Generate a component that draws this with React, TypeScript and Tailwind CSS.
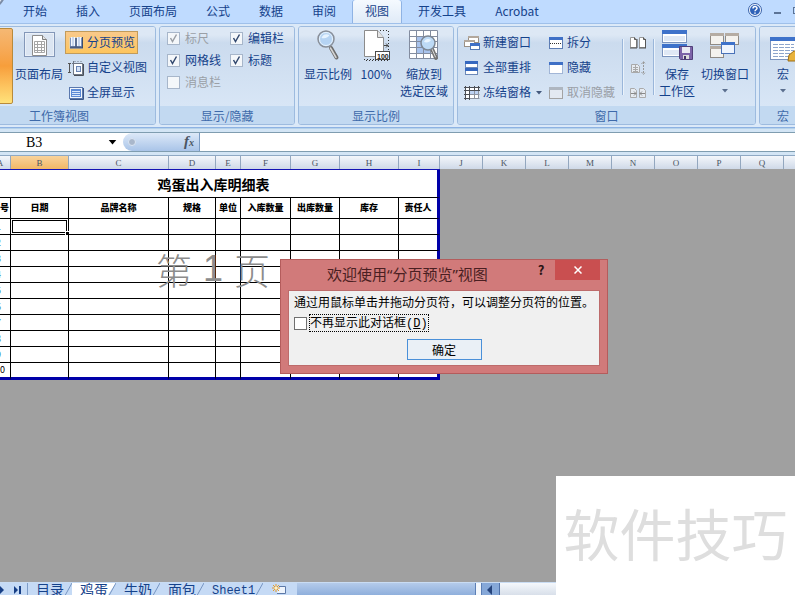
import type { ReactNode } from "react";
import clsx from "clsx";

const TABS = ["开始", "插入", "页面布局", "公式", "数据", "审阅", "视图", "开发工具", "Acrobat"];

const COLUMNS = [
  { id: "A", title: "序号", width: "w-[21px]" },
  { id: "B", title: "日期", width: "w-[58px]" },
  { id: "C", title: "品牌名称", width: "w-[100px]" },
  { id: "D", title: "规格", width: "w-[47px]" },
  { id: "E", title: "单位", width: "w-[25px]" },
  { id: "F", title: "入库数量", width: "w-[50px]" },
  { id: "G", title: "出库数量", width: "w-[49px]" },
  { id: "H", title: "库存", width: "w-[59px]" },
  { id: "I", title: "责任人", width: "w-[41px]" },
];

const EMPTY_COLUMNS = "JKLMNOPQRSTUVWXYZ".split("");
const ROWS = [1, 2, 3, 4, 5, 6, 7, 8, 9, 10];
const SHEETS = ["目录", "鸡蛋", "牛奶", "面包", "Sheet1"];

/* ---------- Icons ---------- */

function Arrow({ className }: { className?: string }) {
  return (
    <svg viewBox="0 0 6 4" className={clsx("w-[6px] h-[4px]", className)}>
      <path d="M0 0h6L3 3.5z" fill="currentColor" />
    </svg>
  );
}

function PageLayoutIcon() {
  return (
    <svg viewBox="0 0 32 32" className="w-8 h-8">
      <rect x="1.500" y="2.500" width="30" height="24" fill="#eaf0f8" stroke="#8397b8" />
      <rect x="3" y="4" width="27" height="21" fill="#dbe5f2" />
      <path d="M9.500 5.500h10l4 4v16h-14z" fill="#fff" stroke="#8d8d8d" />
      <path d="M19.500 5.500v4h4" fill="#e4e4e4" stroke="#7d7d7d" />
      <path
        d="M11.500 11.500h10v11h-10zM11.500 14.500h10M11.500 17.500h10M11.500 20.500h10M14.500 11.500v11M18.500 11.500v11"
        fill="none"
        stroke="#a5a5a5"
      />
    </svg>
  );
}

function NormalViewIcon() {
  return (
    <svg viewBox="0 0 32 32" className="w-8 h-8">
      <rect x="2.500" y="2.500" width="27" height="25" fill="#fff" stroke="#6b6b6b" />
      <path d="M2 7.500h28M2 11.500h28M2 15.500h28M2 19.500h28M2 23.500h28M9.500 3v24M16.500 3v24M23.500 3v24" stroke="#7289ad" />
    </svg>
  );
}

function PageBreakIcon() {
  return (
    <svg viewBox="0 0 16 16" className="w-4 h-4">
      <path d="M1.500 2.500h13v11h-13z" fill="#7c93bd" stroke="#e8d2a4" />
      <path d="M3 2h4v9H3zM9 2h4v9H9z" fill="#f4f8ff" />
      <path d="M5 2v9M11 2v9" stroke="#c9d7ee" strokeWidth="2" />
      <path d="M2 12.500h13" stroke="#4a5c82" strokeWidth="2" />
      <path d="M14.500 2v11M8 3v9" stroke="#3d4d6b" />
    </svg>
  );
}

function CustomViewIcon() {
  return (
    <svg viewBox="0 0 16 16" className="w-4 h-4">
      <path d="M0 3.500h3M0 12.500h3M1.500 3.500v9" stroke="#555" fill="none" />
      <rect x="5.500" y="3.500" width="9" height="11" fill="#fff" stroke="#6f7785" />
      <path d="M4 3.500h11M5.500 1v14" stroke="#6f7785" />
      <path d="M6.500 1.500h1M9.500 1.500h1M12.500 1.500h1" stroke="#6f7785" />
      <rect x="8.500" y="6.500" width="4" height="5" fill="#d5e2f5" stroke="#6a85b5" />
      <path d="M15.500 4v11.500H6" fill="none" stroke="#4a4f58" />
    </svg>
  );
}

function FullScreenIcon() {
  return (
    <svg viewBox="0 0 16 16" className="w-4 h-4">
      <rect x="1.500" y="2.500" width="13" height="11" fill="#f2f6fc" stroke="#5a78ae" />
      <rect x="3" y="4" width="10" height="8" fill="#5c8ad6" />
      <path d="M4 6.500h8M4 8.500h8M4 10.500h8" stroke="#dbe8fb" />
      <path d="M15.500 3v11.500H2" fill="none" stroke="#3b5688" />
    </svg>
  );
}

function ZoomIcon() {
  return (
    <svg viewBox="0 0 32 32" className="w-8 h-8">
      <path d="M19 18l5.500 9.500" stroke="#6d6d6d" strokeWidth="4" strokeLinecap="round" />
      <path d="M18.500 18l5.500 9.500" stroke="#d5d5d5" strokeWidth="1.500" strokeLinecap="round" />
      <circle cx="14" cy="9" r="8" fill="#b5d3f3" stroke="#8a8f98" strokeWidth="1.500" />
      <circle cx="14" cy="9" r="6.500" fill="none" stroke="#e8f3fd" />
      <path d="M9.500 8c1-3 4-5 8-3-1 2-4 4-8 3z" fill="#e6f3ff" />
    </svg>
  );
}

function HundredIcon() {
  return (
    <svg viewBox="0 0 32 32" className="w-8 h-8">
      <path d="M5 .5h23.500v30H5" fill="none" stroke="#333" strokeDasharray="1 2" />
      <path d="M4.500.5h13l6 7v19h-19z" fill="#fff" stroke="#8b8b8b" />
      <path d="M17.500.5v7h6" fill="#e5e5e5" stroke="#8b8b8b" />
      <path d="M24 15.500h4M26 13.500l2 2-2 2" fill="none" stroke="#444" />
      <path d="M4 29.500h11" stroke="#333" strokeDasharray="1 2" />
      <rect x="15.500" y="21.500" width="14" height="8" fill="#fff" stroke="#4a4a4a" />
      <text x="17" y="28.500" fontSize="7" fontWeight="bold" fontFamily="Liberation Sans" fill="#222">
        100
      </text>
    </svg>
  );
}

function ZoomSelectionIcon() {
  return (
    <svg viewBox="0 0 32 32" className="w-8 h-8">
      <rect x="1" y="0" width="29" height="29" fill="#fff" />
      <rect x="8" y="6" width="14" height="17" fill="#a9c4ee" />
      <path
        d="M1.500.5h28v28h-28zM1 6.500h29M1 11.500h29M1 17.500h29M1 23.500h29M8.500 0v29M15.500 0v29M22.500 0v29"
        fill="none"
        stroke="#838da0"
      />
      <path d="M24 19l4 9" stroke="#737373" strokeWidth="4" strokeLinecap="round" />
      <path d="M24 19l3.500 8" stroke="#ddd" strokeLinecap="round" />
      <circle cx="20" cy="13" r="7" fill="#bddaf6" stroke="#7d8794" strokeWidth="1.500" />
      <path d="M16 12c1-3 4-4 7-2-1 2-4 3-7 2z" fill="#eaf5ff" />
    </svg>
  );
}

function NewWindowIcon() {
  return (
    <svg viewBox="0 0 16 16" className="w-4 h-4">
      <rect x="4.500" y="1.500" width="10" height="6" fill="#fff" stroke="#9a8f84" />
      <path d="M4 2h11" stroke="#b3a89d" strokeWidth="2" />
      <rect x=".5" y="5.500" width="10" height="6" fill="#fff" stroke="#9a8f84" />
      <path d="M0 6h11" stroke="#b3a89d" strokeWidth="2" />
      <rect x="6.500" y="8.500" width="9" height="6" fill="#fff" stroke="#5579b5" />
      <path d="M6 8h10v3H6z" fill="#3f70c6" />
    </svg>
  );
}

function ArrangeIcon() {
  return (
    <svg viewBox="0 0 16 16" className="w-4 h-4">
      <rect x="1.500" y="1.500" width="12" height="6" fill="#fff" stroke="#6b88b8" />
      <rect x="1.500" y="8.500" width="12" height="6" fill="#fff" stroke="#6b88b8" />
      <path d="M1 1h13v3H1zM1 8h13v3H1z" fill="#3668bf" />
    </svg>
  );
}

function FreezeIcon() {
  return (
    <svg viewBox="0 0 16 16" className="w-4 h-4">
      <rect x="1" y="2" width="14" height="12" fill="#fff" />
      <path d="M5 5h10v4H5z" fill="#bdd2f2" />
      <path d="M5.500 9.500h10M5.500 13.500h10M10.500 5v9M14.500 5v9" stroke="#8c93a0" />
      <path d="M0 2.500h16M0 5.500h16M0 9.500h5M0 13.500h5M1.500 1v14M5.500 1v14M10.500 1v4M14.500 1v4" stroke="#4c4f55" />
    </svg>
  );
}

function PaneIcon({ kind }: { kind: "split" | "hide" | "unhide" }) {
  const off = kind === "unhide";
  return (
    <svg viewBox="0 0 16 16" className="w-4 h-4">
      <rect
        x="1.500"
        y="2.500"
        width="13"
        height="11"
        fill={off ? "#e3e9f1" : "#fff"}
        stroke={off ? "#a3a3a3" : "#5d7db4"}
        strokeDasharray={kind === "hide" ? "1 1" : undefined}
      />
      <path d="M1 2h14v3H1z" fill={off ? "#aeb6c0" : "#3f70c6"} />
      {kind === "split" && <path d="M2 8.500h12" stroke="#333" strokeDasharray="1 1" />}
    </svg>
  );
}

function SideBySideIcon() {
  return (
    <svg viewBox="0 0 16 16" className="w-4 h-4">
      <path d="M.5 2.500h4l2 2v8h-6zM9.500 2.500h4l2 2v8h-6z" fill="#fff" stroke="#9a9a9a" />
      <path d="M0 13h7M9 13h7M7 4v9M15.500 4v9" stroke="#555" />
      <path d="M4.500 2.500v2h2M13.500 2.500v2h2" fill="none" stroke="#555" />
    </svg>
  );
}

function SyncScrollIcon() {
  return (
    <svg viewBox="0 0 16 16" className="w-4 h-4">
      <path d="M1.500 4.500h6l2 2v6h-8z" fill="#e6ebf1" stroke="#a9a9a9" />
      <path d="M3 7.500h5M3 9.500h5M3 11.500h5M5.500 5v8" stroke="#a9a9a9" />
      <path d="M13.500 2v12M11.500 4l2-2.500 2 2.500M11.500 12l2 2.500 2-2.500" fill="none" stroke="#999" strokeDasharray="2 1" />
    </svg>
  );
}

function ResetPositionIcon() {
  return (
    <svg viewBox="0 0 16 16" className="w-4 h-4">
      <path d="M.5 3.500h4l2 2v7h-6zM9.500 3.500h4l2 2v7h-6z" fill="#e6ebf1" stroke="#aaa" />
      <path d="M1 8.500h5M4 6.500l2 2-2 2M15 8.500h-5M12 6.500l-2 2 2 2" fill="none" stroke="#888" />
    </svg>
  );
}

function SaveWorkspaceIcon() {
  return (
    <svg viewBox="0 0 32 32" className="w-8 h-8">
      <rect x="1.500" y=".5" width="24" height="12" fill="#fff" stroke="#7a93bd" />
      <rect x="1.500" y="14.500" width="24" height="12" fill="#fff" stroke="#7a93bd" />
      <path d="M1 0h25v4H1zM1 14h25v4H1z" fill="#3e72ca" />
      <path d="M3 6h21v5H3zM3 20h16v5H3z" fill="#dfe8f5" />
      <path d="M18.500 16.500h13v13h-12l-1-1z" fill="#7d64a8" stroke="#51407a" />
      <path d="M21 17h8v6h-8z" fill="#e9e9f3" />
      <path d="M22 25h6v4h-6z" fill="#ddd" />
      <path d="M23 26h2v3h-2z" fill="#433566" />
    </svg>
  );
}

function SwitchWindowIcon() {
  return (
    <svg viewBox="0 0 32 32" className="w-8 h-8">
      <g fill="#f4f2ee" stroke="#8f8a84">
        <rect x="1.500" y="3.500" width="13" height="11" />
        <rect x="16.500" y="3.500" width="13" height="11" />
        <rect x="1.500" y="16.500" width="13" height="11" />
      </g>
      <path d="M1 3h14v3H1zM16 3h14v3H16zM1 16h14v3H1z" fill="#b5aca3" />
      <rect x="12.500" y="12.500" width="13" height="11" fill="#eef4fd" stroke="#4a72b8" />
      <path d="M12 12h14v3H12z" fill="#3e72ca" />
    </svg>
  );
}

function MacroIcon() {
  return (
    <svg viewBox="0 0 32 32" className="w-8 h-8">
      <rect x="3.500" y="7.500" width="26" height="22" fill="#fff" stroke="#7a93bd" />
      <path d="M3 7h27v4H3z" fill="#3e72ca" />
      <path d="M6 14.500h21M6 17.500h21M6 20.500h21M6 23.500h21M6 26.500h21" stroke="#8da5cc" strokeDasharray="5 1" />
      <path d="M22 25l5-4h4v10H21z" fill="#e8b23c" stroke="#9c6f16" />
    </svg>
  );
}

/* ---------- Ribbon parts ---------- */

function Group({ title, children }: { title: string; children: ReactNode }) {
  return (
    <section className="shrink-0 flex flex-col rounded-[3px] border border-[#9dbbdf] overflow-hidden">
      <div className="h-20 flex px-[5px] bg-linear-to-b from-[#dde8f5] from-10% via-[#cbdbee] via-20% to-[#d8e6f6]">
        {children}
      </div>
      <h2 className="h-[18px] leading-[20px] text-center text-[#3e6aaa] bg-[#c2d9f1]">{title}</h2>
    </section>
  );
}

function BigButton({ icon, lines, menu }: { icon: ReactNode; lines: string[]; menu?: boolean }) {
  return (
    <button className="shrink-0 flex flex-col items-center pt-[3px] leading-[17px]">
      {icon}
      <span className="pt-[3px]">{lines[0]}</span>
      {lines[1] && <span>{lines[1]}</span>}
      {menu && <Arrow className="mt-[7px] text-[#5b6f8f]" />}
    </button>
  );
}

function SmallButton({
  icon,
  label,
  active,
  menu,
  disabled,
}: {
  icon: ReactNode;
  label?: string;
  active?: boolean;
  menu?: boolean;
  disabled?: boolean;
}) {
  return (
    <button
      disabled={disabled}
      className={clsx(
        "h-[23px] my-px px-[2px] flex items-center gap-[3px] border whitespace-nowrap",
        active ? "border-[#c29b5a] bg-linear-to-b from-[#f9c98a] to-[#fdc55c]" : "border-transparent",
        disabled && "text-[#9a9fa6]"
      )}
    >
      {icon}
      {label && <span className="pb-0.5">{label}</span>}
      {menu && <Arrow className="ml-0.5 text-[#44597d]" />}
    </button>
  );
}

function CheckItem({ label, checked, disabled }: { label: string; checked?: boolean; disabled?: boolean }) {
  return (
    <label className={clsx("h-[22px] flex items-center gap-[5px]", disabled && "text-[#9a9fa6]")}>
      <span className="relative flex">
        <input
          type="checkbox"
          defaultChecked={checked}
          disabled={disabled}
          className="peer appearance-none w-[13px] h-[13px] bg-[#f4f7fa] border border-[#a7b6ca]"
        />
        <svg viewBox="0 0 13 13" className="absolute inset-0 hidden peer-checked:block">
          <path d="M3.500 6l2 3.500 4-7" fill="none" stroke={disabled ? "#9a9fa6" : "#33496f"} strokeWidth="1.500" />
        </svg>
      </span>
      {label}
    </label>
  );
}

function Divider() {
  return <div className="w-px h-14 mt-3 bg-[#9ab6da] shadow-[1px_0_0_#eaf2fb]" />;
}

function Ribbon() {
  return (
    <div className="h-[104px] shrink-0 flex gap-[3px] pt-[2px] pb-[2px] border-b border-[#8db2e3] bg-[#dbe9f8] overflow-hidden">
      <div className="shrink-0 -ml-[38px] flex">
        <Group title="工作簿视图">
          <div className="w-[46px] -ml-px mt-px mb-0.5 rounded-[2px] border border-[#b98a3a] bg-linear-to-b from-[#f5b873] via-[#f79e3b] to-[#ffe27a]">
            <BigButton icon={<NormalViewIcon />} lines={["普通"]} />
          </div>
          <div className="mx-[2px] flex">
            <BigButton icon={<PageLayoutIcon />} lines={["页面布局"]} />
          </div>
          <div className="pt-[3px] flex flex-col items-start">
            <SmallButton icon={<PageBreakIcon />} label="分页预览" active />
            <SmallButton icon={<CustomViewIcon />} label="自定义视图" />
            <SmallButton icon={<FullScreenIcon />} label="全屏显示" />
          </div>
        </Group>
      </div>

      <Group title="显示/隐藏">
        <div className="w-[124px] pl-[2px] flex gap-[9px]">
          <div>
            <CheckItem label="标尺" checked disabled />
            <CheckItem label="网格线" checked />
            <CheckItem label="消息栏" disabled />
          </div>
          <div>
            <CheckItem label="编辑栏" checked />
            <CheckItem label="标题" checked />
          </div>
        </div>
      </Group>

      <Group title="显示比例">
        <div className="flex gap-2">
          <BigButton icon={<ZoomIcon />} lines={["显示比例"]} />
          <BigButton icon={<HundredIcon />} lines={["100%"]} />
          <BigButton icon={<ZoomSelectionIcon />} lines={["缩放到", "选定区域"]} />
        </div>
      </Group>

      <Group title="窗口">
        <div className="-ml-0.5 pt-[3px] flex flex-col items-start">
          <SmallButton icon={<NewWindowIcon />} label="新建窗口" />
          <SmallButton icon={<ArrangeIcon />} label="全部重排" />
          <SmallButton icon={<FreezeIcon />} label="冻结窗格" menu />
        </div>
        <div className="pt-[3px] pr-1 flex flex-col items-start">
          <SmallButton icon={<PaneIcon kind="split" />} label="拆分" />
          <SmallButton icon={<PaneIcon kind="hide" />} label="隐藏" />
          <SmallButton icon={<PaneIcon kind="unhide" />} label="取消隐藏" disabled />
        </div>
        <Divider />
        <div className="pt-[3px] px-1 flex flex-col">
          <SmallButton icon={<SideBySideIcon />} />
          <SmallButton icon={<SyncScrollIcon />} disabled />
          <SmallButton icon={<ResetPositionIcon />} disabled />
        </div>
        <Divider />
        <div className="px-[5px] -mr-1 flex gap-[6px]">
          <BigButton icon={<SaveWorkspaceIcon />} lines={["保存", "工作区"]} />
          <BigButton icon={<SwitchWindowIcon />} lines={["切换窗口"]} menu />
        </div>
      </Group>

      <Group title="宏">
        <div className="px-[2px]">
          <BigButton icon={<MacroIcon />} lines={["宏"]} menu />
        </div>
      </Group>
    </div>
  );
}

function TabBar() {
  return (
    <nav className="relative h-6 shrink-0 flex gap-[5px] pl-[11px] bg-[#bfdbff] border-b border-[#9fc0ea] overflow-hidden">
      <div className="absolute -left-[41px] -top-[36px] w-12 h-12 rounded-full border-2 border-[#7c8ca5] bg-[#dfe6ef]" />
      {TABS.map((tab) => (
        <button
          key={tab}
          className={clsx(
            "shrink-0 h-6 pb-[2px] px-3 leading-[20px]",
            tab === "视图" &&
              "rounded-t-[3px] bg-linear-to-b from-[#f5faff] to-[#dfeaf7] shadow-[-1px_0_0_#8fb3e4,1px_0_0_#8fb3e4]"
          )}
        >
          {tab}
        </button>
      ))}
      <div className="ml-auto -mr-[7px] flex items-center gap-3 pb-[3px]">
        <button aria-label="帮助">
          <svg viewBox="0 0 14 14" className="w-3.5 h-3.5">
            <circle cx="7" cy="7" r="6.500" fill="#f3f8ff" stroke="#3a62a8" />
            <circle cx="7" cy="7" r="5" fill="#2f62b8" />
            <path d="M5 5.500C5 3 9 3 9 5.300c0 1.500-2 1.400-2 3M7 9.500v1.300" fill="none" stroke="#fff" strokeWidth="1.500" />
          </svg>
        </button>
        <button aria-label="最小化" className="w-[7px] h-0.5 mt-1.5 bg-[#5b7396]" />
        <button aria-label="还原" className="w-[9px] h-[7px] border border-[#5b7396]" />
      </div>
    </nav>
  );
}

function FormulaBar() {
  return (
    <div className="h-[27px] shrink-0 pt-[3px] pb-[3px] flex flex-col bg-[#d3e5f5] border-t border-[#b5d2ea]">
      <div className="h-[20px] flex border-y border-[#7f9db0] bg-white">
        <input
          aria-label="名称框"
          defaultValue="B3"
          className="w-[108px] pl-[26px] pt-px text-[14px] text-black font-['Liberation_Serif',serif] outline-none"
        />
        <button aria-label="名称列表" className="w-[15px] flex items-center text-black">
          <Arrow className="w-[9px] h-[5px]" />
        </button>
        <div className="w-[77px] flex items-center justify-between px-[5px] rounded-l-full border-r border-[#7b9cc4] bg-linear-to-b from-[#dde9f8] to-[#a9c4e8]">
          <span className="w-2 h-2 rounded-full bg-[#a9b7cb] border border-[#dbe6f4]" />
          <button
            aria-label="插入函数"
            className="text-[15px] leading-[16px] font-bold italic text-[#4b5563] font-['Liberation_Serif',serif]"
          >
            f<span className="text-[10px]">x</span>
          </button>
        </div>
        <input aria-label="编辑栏" className="flex-1 min-w-0 px-1 outline-none" />
      </div>
    </div>
  );
}

/* ---------- Sheet ---------- */

function ColumnHeaders() {
  return (
    <div className="h-[14px] shrink-0 flex border-t border-[#8fa9c4] text-[9px] leading-[14px] text-center text-[#4b5563] font-['Liberation_Serif',serif] bg-linear-to-b from-[#f4f7fb] to-[#cfd9e8] overflow-hidden">
      <div className="flex -ml-[10px]">
        {COLUMNS.map((col) => (
          <div
            key={col.id}
            className={clsx(
              "shrink-0 border-r border-[#93a7bf]",
              col.width,
              col.id === "B" && "bg-linear-to-b from-[#f9d39b] to-[#f1b765]"
            )}
          >
            {col.id}
          </div>
        ))}
        {EMPTY_COLUMNS.map((id) => (
          <div key={id} className="shrink-0 w-[43px] border-r border-[#93a7bf]">
            {id}
          </div>
        ))}
      </div>
    </div>
  );
}

function Sheet() {
  return (
    <main className="flex-1 min-h-0 bg-[#a0a0a0] overflow-hidden">
      <div className="relative w-[450px] -ml-[10px]">
        <table className="w-full table-fixed border-separate border-spacing-0 border-t border-t-[#1414b4] bg-white text-black text-[9px] leading-[10px] text-center">
          <colgroup>
            {COLUMNS.map((col) => (
              <col key={col.id} className={col.width} />
            ))}
          </colgroup>
          <thead>
            <tr>
              <th
                colSpan={9}
                className="h-7 p-0 text-[14px] font-bold border-b border-black border-r-3 border-r-[#0000a8]"
              >
                鸡蛋出入库明细表
              </th>
            </tr>
            <tr>
              {COLUMNS.map((col) => (
                <th
                  key={col.id}
                  className="h-[21px] p-0 font-black whitespace-nowrap border-b border-r border-black last:border-r-3 last:border-r-[#0000a8]"
                >
                  {col.title}
                </th>
              ))}
            </tr>
          </thead>
          <tbody>
            {ROWS.map((row) => (
              <tr key={row} className="group">
                {COLUMNS.map((col) => (
                  <td
                    key={col.id}
                    className="relative h-4 p-0 border-b border-r border-black last:border-r-3 last:border-r-[#0000a8] group-last:border-b-3 group-last:border-b-[#0000a8] group-last:h-[17px]"
                  >
                    {col.id === "A" && (
                      <span className={row === 10 ? "text-black" : "pr-[3px] text-[#2f86a8]"}>{row}</span>
                    )}
                    {row === 1 && col.id === "B" && (
                      <div className="absolute inset-px border border-black outline outline-white">
                        <span className="absolute -right-[4px] -bottom-[4px] w-[5px] h-[5px] bg-black border border-white" />
                      </div>
                    )}
                  </td>
                ))}
              </tr>
            ))}
          </tbody>
        </table>
        {/* Page number printed over the cells */}
        <div className="absolute left-[166px] top-[76px] flex gap-[11px] text-[36px] leading-[48px] font-light text-[#8c8c8c] pointer-events-none">
          <span>第</span>
          <span className="font-normal font-['Liberation_Sans',sans-serif]">1</span>
          <span>页</span>
        </div>
      </div>
    </main>
  );
}

function SheetTabs() {
  return (
    <div className="h-[13px] shrink-0 flex items-start border-t border-[#c9dcf3] bg-linear-to-b from-[#b4cbea] to-[#8fafdc] overflow-hidden">
      <div className="h-5 flex items-start bg-[#c5daf5]">
        <div className="w-7 h-5 pt-[3px] flex gap-2.5 border-r border-[#7d9cc8] text-[#173f86]">
          <svg viewBox="0 0 4 8" className="w-1 h-2">
            <path d="M0 0l4 4-4 4z" fill="currentColor" />
          </svg>
          <svg viewBox="0 0 7 8" className="w-[7px] h-2">
            <path d="M0 0l4 4-4 4zM5 0h2v8H5z" fill="currentColor" />
          </svg>
        </div>
        {SHEETS.map((sheet) => (
          <button
            key={sheet}
            className={clsx(
              "h-5 pl-2 flex items-start",
              sheet === "鸡蛋" && "bg-white",
              sheet === "Sheet1"
                ? "font-['Liberation_Mono',monospace] text-[12px] leading-[16px]"
                : "text-[14px] leading-[13px]"
            )}
          >
            {sheet}
            <svg viewBox="0 0 8 20" className="w-2 h-5">
              {sheet === "鸡蛋" && <path d="M8 0v20H-6z" fill="#c5daf5" />}
              <path d="M8 0l-10 18" stroke="#7695c2" />
            </svg>
          </button>
        ))}
        <button aria-label="插入工作表" className="pl-2 pr-2.5">
          <svg viewBox="0 0 16 14" className="w-4 h-3.5">
            <path d="M8 3.500h6.500v7H6" fill="#eef4fc" stroke="#5c79a8" />
            <path d="M5 1v8M1 5h8M2 2l6 6M8 2L2 8" stroke="#e39a2d" />
            <circle cx="5" cy="5" r="1.500" fill="#fff3c4" />
          </svg>
        </button>
      </div>
      <div className="ml-auto w-[320px] h-5 flex">
        <div className="w-[7px] bg-[#f3f7fc] border-x border-[#5c7fb5]" />
        <button aria-label="向左滚动" className="w-[18px] pt-0.5 pl-[5px] flex border-r border-[#4e70a8] bg-[#86a8d8]">
          <svg viewBox="0 0 6 10" className="w-1.5 h-2.5">
            <path d="M5 0v10L0 5z" fill="#26447c" />
          </svg>
        </button>
        <div className="flex-1 bg-linear-to-b from-[#f5f8fc] to-[#c5cfde]" />
      </div>
    </div>
  );
}

function PreviewDialog() {
  return (
    <div
      role="dialog"
      aria-label="欢迎使用分页预览视图"
      className="absolute left-[280px] top-[259px] w-[328px] px-[7px] pb-[7px] border border-[#b45c5c] bg-[#d17a7a] text-black"
    >
      <div className="h-[30px] flex items-start">
        <h1 className="flex-1 pl-[39px] text-[15px] leading-[28px] whitespace-nowrap text-[#4a1f22] font-['Noto_Sans','Noto_Sans_CJK_SC',sans-serif]">
          欢迎使用“分页预览”视图
        </h1>
        <button className="w-7 h-5 text-[13px] leading-[20px] font-bold text-[#2a1414]">?</button>
        <button aria-label="关闭" className="w-[45px] h-5 flex items-center justify-center bg-[#c94f50]">
          <svg viewBox="0 0 8 8" className="w-2 h-2">
            <path d="M.5.5l7 7M7.500.5l-7 7" stroke="#fff" strokeWidth="1.500" />
          </svg>
        </button>
      </div>
      <div className="px-[5px] pt-[2px] pb-[5px] border border-[#bd6b6b] bg-[#f0f0f0]">
        <p className="leading-[18px] whitespace-nowrap">通过用鼠标单击并拖动分页符，可以调整分页符的位置。</p>
        <label className="mt-[3px] flex items-center gap-[2px]">
          <input type="checkbox" className="appearance-none w-[13px] h-[13px] border border-[#707070] bg-white" />
          <span className="leading-[14px] border border-dotted border-black">
            不再显示此对话框
            <span className="font-['Liberation_Mono',monospace]">
              (<u>D</u>)
            </span>
          </span>
        </label>
        <button className="block w-[75px] h-[21px] mt-[7px] mx-auto leading-[19px] border border-[#4a90d9] bg-[#eaf0f6]">
          确定
        </button>
      </div>
    </div>
  );
}

export default function App() {
  return (
    <div className="relative h-screen flex flex-col overflow-hidden text-[12px] text-[#15428b] font-['Noto_Sans_CJK_SC',sans-serif]">
      <TabBar />
      <Ribbon />
      <FormulaBar />
      <ColumnHeaders />
      <Sheet />
      <SheetTabs />
      <PreviewDialog />
      {/* Corner watermark */}
      <div className="absolute right-0 bottom-0 w-[239px] h-[119px] pb-2 flex items-center justify-center bg-white text-[56px] text-[#dedede] whitespace-nowrap">
        软件技巧
      </div>
    </div>
  );
}
